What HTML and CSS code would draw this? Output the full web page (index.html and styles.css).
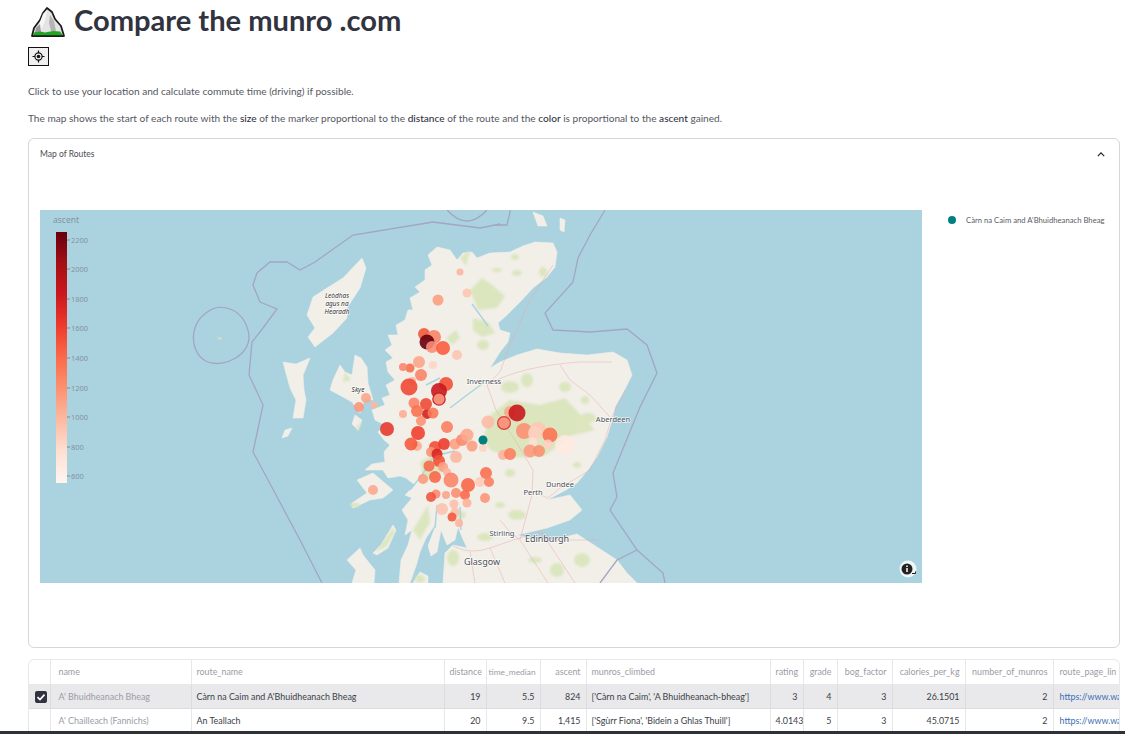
FILE: index.html
```html
<!DOCTYPE html>
<html lang="en">
<head>
  <meta charset="UTF-8" />
  <meta name="viewport" content="width=device-width, initial-scale=1.0"/>
  <title>Compare the munro .com</title>
  <link rel="stylesheet" href="styles.css">
</head>
<body>

  <div class="page">
    <div class="title-row">
      <svg class="logo" viewBox="0 0 34 31" width="34" height="31">
        <path d="M1 29 L3 21 L9 13 L12 6 L16 1 L21 5 L24 12 L30 19 L33 29 Z" fill="#e4e4e4" stroke="#1c1c1c" stroke-width="1.8" stroke-linejoin="round"/>
        <path d="M12 7 L16 3 L14 14 L9 26 L7 20 Z" fill="#f6f6f6"/>
        <path d="M19 8 L23 14 L25 24 L20 24 L18 16 Z" fill="#b4b4b4"/>
        <path d="M5 21 L9 17 L10 25 L4 26 Z" fill="#9a9a9a"/>
        <path d="M2 28.2 L3 25.5 L9 24.5 L14 25.5 L22 24 L29 24.5 L32 28.2 Z" fill="#1fa51f"/>
      </svg>
      <h1>Compare the munro .com</h1>
    </div>

    <button class="locate-btn" type="button">
      <svg viewBox="0 0 13 13" width="13" height="13">
        <circle cx="6.5" cy="6.5" r="3.6" fill="none" stroke="#111" stroke-width="1.2"/>
        <circle cx="6.5" cy="6.5" r="1.8" fill="#111"/>
        <path d="M6.5 0.5V3M6.5 10V12.5M0.5 6.5H3M10 6.5H12.5" stroke="#111" stroke-width="1.2"/>
      </svg>
    </button>

    <p class="intro">Click to use your location and calculate commute time (driving) if possible.</p>
    <p class="intro second">The map shows the start of each route with the <b>size</b> of the marker proportional to the <b>distance</b> of the route and the <b>color</b> is proportional to the <b>ascent</b> gained.</p>

    <section class="expander">
      <div class="expander-head">
        <span>Map of Routes</span>
        <svg viewBox="0 0 10 6" width="8" height="5"><path d="M1 5 L5 1 L9 5" fill="none" stroke="#222" stroke-width="1.5"/></svg>
      </div>

      <div class="chart">
        <svg class="map" viewBox="40 210 882 373" width="882" height="373">
          <defs>
            <linearGradient id="reds" x1="0" y1="1" x2="0" y2="0">
              <stop offset="0" stop-color="#fff5f0"/>
              <stop offset="0.125" stop-color="#fee0d2"/>
              <stop offset="0.25" stop-color="#fcbba1"/>
              <stop offset="0.375" stop-color="#fc9272"/>
              <stop offset="0.5" stop-color="#fb6a4a"/>
              <stop offset="0.625" stop-color="#ef3b2c"/>
              <stop offset="0.75" stop-color="#cb181d"/>
              <stop offset="0.875" stop-color="#a50f15"/>
              <stop offset="1" stop-color="#67000d"/>
            </linearGradient>
          </defs>

          <rect x="40" y="210" width="882" height="373" fill="#aad3df"/>

          <!-- land -->
          <g class="land">
            <path d="M437 247 L450 250 L457 260 L463 253 L472 252 L477 258 L490 253 L510 252 L523 246 L535 242 L553 243 L557 252 L555 267 L547 277 L533 288 L520 302 L507 315 L498 323 L500 330 L510 333 L508 342 L500 352 L495 360 L490 368 L500 362 L517 355 L537 349 L560 353 L587 355 L613 352 L627 360 L632 375 L623 393 L615 407 L613 417 L607 437 L597 457 L588 470 L577 483 L566 490 L547 500 L570 495 L582 510 L570 520 L547 528 L517 535 L530 538 L553 540 L577 534 L597 547 L617 560 L627 573 L637 583 L443 583 L445 553 L453 545 L467 548 L462 537 L458 527 L455 540 L447 545 L441 530 L437 552 L431 556 L428 546 L437 522 L426 538 L420 552 L416 566 L410 583 L399 583 L401 560 L408 545 L412 530 L405 535 L408 520 L402 510 L412 498 L405 495 L415 485 L406 478 L400 476 L388 478 L383 470 L365 470 L372 464 L385 462 L384 452 L390 445 L384 440 L378 432 L385 425 L375 420 L372 410 L385 405 L382 398 L390 395 L386 385 L395 380 L388 372 L386 362 L393 358 L385 350 L392 345 L388 335 L398 335 L396 325 L405 320 L408 310 L413 310 L410 298 L420 292 L415 287 L425 280 L425 270 L432 265 L428 255 Z"/>
            <path d="M333 380 L340 365 L345 372 L352 375 L355 355 L361 358 L367 367 L368 383 L373 400 L365 398 L360 413 L352 402 L343 397 L330 390 Z"/>
            <path d="M362 258 L366 268 L360 288 L347 308 L347 318 L333 333 L315 347 L308 337 L315 328 L307 315 L313 297 L327 288 L343 278 Z"/>
            <path d="M283 362 L296 364 L310 358 L306 368 L303 375 L304 390 L306 400 L303 418 L293 418 L296 400 L290 388 Z"/>
            <path d="M292 428 L288 436 L282 438 L285 430 Z"/>
            <path d="M357 480 L373 473 L393 490 L383 498 L370 500 L353 508 L352 503 L367 493 Z"/>
            <path d="M347 560 L360 548 L363 555 L375 570 L374 583 L352 583 L356 570 Z"/>
            <path d="M533 212 L543 216 L547 226 L538 226 Z"/>
            <path d="M560 218 L565 220 L564 232 L560 230 Z"/>
            <path d="M355 415 L362 420 L358 430 L352 424 Z"/>
            <path d="M413 583 L420 572 L428 576 L428 583 Z"/>
            <path d="M393 525 L381 545 L373 553 L377 555 L388 548 L396 530 Z"/>
          </g>

          <!-- woods and hills -->
          <g class="green">
            <path d="M470 290 L482 278 L490 283 L505 296 L497 308 L478 310 Z"/>
            <path d="M473 318 L488 322 L495 333 L482 337 L473 330 Z"/>
            <path d="M446 338 L456 330 L460 338 L452 345 Z"/>
            <path d="M460 258 L470 250 L466 266 Z"/>
            <path d="M483 440 L490 415 L510 400 L540 405 L565 398 L595 430 L570 436 L545 456 L510 458 L490 450 Z"/>
            <path d="M393 528 L381 545 L375 552 L386 547 L395 532 Z"/>
            <path d="M420 462 L440 450 L445 470 L425 482 Z"/>
            <path d="M413 530 L428 505 L430 522 L420 540 Z"/>
            <path d="M356 428 L362 420 L358 432 Z"/>
            <path d="M345 372 L351 380 L343 382 Z"/>
            <ellipse cx="515" cy="257" rx="4" ry="3"/>
            <ellipse cx="497" cy="270" rx="5" ry="2"/>
            <ellipse cx="517" cy="273" rx="5" ry="3"/>
            <ellipse cx="543" cy="272" rx="4" ry="5"/>
            <ellipse cx="483" cy="345" rx="6" ry="5"/>
            <ellipse cx="510" cy="387" rx="9" ry="6"/>
            <ellipse cx="527" cy="380" rx="6" ry="7"/>
            <ellipse cx="565" cy="387" rx="6" ry="5"/>
            <ellipse cx="585" cy="400" rx="4" ry="4"/>
            <ellipse cx="588" cy="418" rx="8" ry="5"/>
            <ellipse cx="577" cy="465" rx="4" ry="3"/>
            <ellipse cx="510" cy="473" rx="5" ry="4"/>
            <ellipse cx="517" cy="515" rx="9" ry="5"/>
            <ellipse cx="485" cy="537" rx="8" ry="4"/>
            <ellipse cx="557" cy="570" rx="7" ry="7"/>
            <ellipse cx="582" cy="560" rx="8" ry="7"/>
            <ellipse cx="535" cy="560" rx="7" ry="3"/>
            <ellipse cx="453" cy="558" rx="6" ry="8"/>
            <ellipse cx="420" cy="579" rx="5" ry="4"/>
            <ellipse cx="355" cy="505" rx="5" ry="2"/>
            <ellipse cx="460" cy="515" rx="6" ry="4"/>
            <ellipse cx="500" cy="505" rx="5" ry="3"/>
          </g>

          <!-- lochs -->
          <g class="lochs">
            <path d="M450 408 L467 395 L482 384"/>
            <path d="M410 490 L422 475 L436 453"/>
            <path d="M438 455 L455 451"/>
            <path d="M437 505 L435 528"/>
            <path d="M460 507 L461 530"/>
            <path d="M472 304 L488 326"/>
            <path d="M426 385 L440 378"/>
          </g>

          <!-- roads -->
          <g class="roads">
            <path d="M453 546 Q470 555 490 548 T538 532 L556 540 L600 540"/>
            <path d="M500 520 L510 532 L520 540 L532 495 L533 470 L515 440 L496 410 L487 385 Q520 366 580 362 L612 362"/>
            <path d="M533 492 L548 498 L560 488 L590 470 L605 440 L612 417 L625 390"/>
            <path d="M487 385 L500 372 L510 345 L530 300 L553 265"/>
            <path d="M470 552 L475 583 M490 548 L505 583 M520 540 L548 583 M540 530 L575 583"/>
            <path d="M610 417 L590 395 L570 380 L560 365"/>
          </g>

          <!-- maritime borders -->
          <g class="border">
            <path d="M500 224 L480 228 L433 222 L353 235 L315 262 L300 270 L287 262 L270 262 L257 273 L253 285 L260 302 L277 309 L263 328 L252 342 L249 375 L263 405 L253 452 L275 493 L300 540 L322 583"/>
            <path d="M495 225 L507 225 L510 212 L510 210"/>
            <path d="M447 210 Q467 232 487 210"/>
            <path d="M605 210 L590 235 L578 258 L573 282 L545 313 L553 330 L590 332 L627 329 L647 345 L657 373 L640 407 L613 473 L617 497 L610 510 L637 550 L663 573 L665 583"/>
            <path d="M637 550 L617 560 L600 583"/>
            <path d="M206 313 C222 300 245 310 249 335 C250 355 225 368 208 362 C190 355 188 325 206 313 Z"/>
          </g>
          <path d="M217 337 L222 338 L220 340 Z" fill="#dde4b4"/>

          <!-- route markers -->
          <g class="markers">
            <circle cx="438" cy="300" r="5.5" fill="#fc9e80"/>
            <circle cx="460" cy="272" r="3.5" fill="#fbb6a0"/>
            <circle cx="467" cy="293" r="4.5" fill="#fcc7b2"/>
            <circle cx="424" cy="334" r="6" fill="#ef5a3c"/>
            <circle cx="434" cy="337" r="7" fill="#f9836a"/>
            <circle cx="427" cy="342" r="7.5" fill="#67000d"/>
            <circle cx="432" cy="347" r="6" fill="#fb8d74"/>
            <circle cx="443" cy="348" r="7" fill="#fb5c3f"/>
            <circle cx="457" cy="355" r="5" fill="#fcc5b0"/>
            <circle cx="419" cy="362" r="6" fill="#fca58b"/>
            <circle cx="433" cy="365" r="4" fill="#fdd5c5"/>
            <circle cx="410" cy="368" r="4.5" fill="#f7704f"/>
            <circle cx="403" cy="367" r="4" fill="#f9876e"/>
            <circle cx="421" cy="375" r="6" fill="#fb8466"/>
            <circle cx="412" cy="381" r="4" fill="#fbb19a"/>
            <circle cx="409" cy="387" r="8.5" fill="#ef4a36"/>
            <circle cx="446" cy="384" r="7" fill="#f44f36"/>
            <circle cx="439" cy="391" r="8" fill="#c9181d"/>
            <circle cx="439" cy="399" r="6.8" fill="#c9181d"/>
            <circle cx="439" cy="399" r="5.5" fill="#fb9a7f"/>
            <circle cx="366" cy="398" r="5" fill="#fca68b"/>
            <circle cx="359" cy="407" r="5" fill="#fc9679"/>
            <circle cx="374" cy="405" r="3.5" fill="#fcb7a0"/>
            <circle cx="403" cy="414" r="4" fill="#fcae95"/>
            <circle cx="414" cy="403" r="5.5" fill="#fb8466"/>
            <circle cx="427" cy="414" r="5" fill="#d42020"/>
            <circle cx="426" cy="404" r="6" fill="#ef4a36"/>
            <circle cx="417" cy="411" r="6" fill="#f9714f"/>
            <circle cx="433" cy="413" r="5.5" fill="#fb7858"/>
            <circle cx="421" cy="421" r="5" fill="#fc9272"/>
            <circle cx="387" cy="429" r="7" fill="#e63a2e"/>
            <circle cx="418" cy="433" r="7" fill="#ef3f2f"/>
            <circle cx="447" cy="427" r="6" fill="#fb8060"/>
            <circle cx="417" cy="446" r="5" fill="#fcae95"/>
            <circle cx="411" cy="444" r="6.5" fill="#f65b40"/>
            <circle cx="435" cy="447" r="6" fill="#ef4f38"/>
            <circle cx="444" cy="444" r="6" fill="#ec3c2c"/>
            <circle cx="455" cy="444" r="5.5" fill="#fca084"/>
            <circle cx="462" cy="440" r="6" fill="#fb8a6e"/>
            <circle cx="467" cy="435" r="6.5" fill="#fca78e"/>
            <circle cx="472" cy="446" r="5.5" fill="#fc9e84"/>
            <circle cx="488" cy="422" r="6.5" fill="#fcbba6"/>
            <circle cx="431" cy="452" r="5" fill="#fb9175"/>
            <circle cx="437" cy="454" r="5.5" fill="#d92620"/>
            <circle cx="439" cy="461" r="6" fill="#f4503a"/>
            <circle cx="456" cy="457" r="6" fill="#fcb7a0"/>
            <circle cx="429" cy="466" r="5.5" fill="#f8694c"/>
            <circle cx="443" cy="467" r="5" fill="#fca085"/>
            <circle cx="447" cy="472" r="4" fill="#fdb49f"/>
            <circle cx="486" cy="473" r="6" fill="#fb7050"/>
            <circle cx="435" cy="477" r="6" fill="#f8674a"/>
            <circle cx="423" cy="479" r="5" fill="#fb9a7e"/>
            <circle cx="451" cy="480" r="7.5" fill="#fb8569"/>
            <circle cx="480" cy="482" r="5" fill="#fdcbb8"/>
            <circle cx="468" cy="485" r="7" fill="#f86749"/>
            <circle cx="489" cy="482" r="5" fill="#fb8060"/>
            <circle cx="373" cy="490" r="5" fill="#fca78e"/>
            <circle cx="436" cy="494" r="4.5" fill="#fb8a6e"/>
            <circle cx="431" cy="497" r="5" fill="#f2563f"/>
            <circle cx="446" cy="495" r="4" fill="#fca58b"/>
            <circle cx="456" cy="493" r="5" fill="#fb8d72"/>
            <circle cx="465" cy="495" r="5" fill="#f9694c"/>
            <circle cx="485" cy="498" r="5" fill="#fc9678"/>
            <circle cx="467" cy="503" r="4.5" fill="#fcb29b"/>
            <circle cx="454" cy="504" r="4.5" fill="#fdc0ac"/>
            <circle cx="442" cy="509" r="6" fill="#fdc3af"/>
            <circle cx="455" cy="512" r="4.5" fill="#fcc0ac"/>
            <circle cx="452" cy="517" r="4.5" fill="#f4583c"/>
            <circle cx="459" cy="523" r="4" fill="#fcb5a0"/>
            <circle cx="510" cy="412" r="6" fill="#fca68b"/>
            <circle cx="517" cy="413" r="8.5" fill="#c9181d"/>
            <circle cx="504" cy="423" r="7" fill="#d62f27"/>
            <circle cx="504" cy="423" r="5.8" fill="#fc9f87"/>
            <circle cx="524" cy="431" r="8" fill="#fc8f72"/>
            <circle cx="538" cy="430" r="8" fill="#fdc7b3"/>
            <circle cx="535" cy="433" r="7" fill="#fdd0be"/>
            <circle cx="550" cy="435" r="7.5" fill="#fb7454"/>
            <circle cx="533" cy="442" r="4.5" fill="#fee0d3"/>
            <circle cx="548" cy="444" r="4.5" fill="#fdd2c1"/>
            <circle cx="530" cy="451" r="6.5" fill="#fc9a7e"/>
            <circle cx="539" cy="451" r="6" fill="#fb9072"/>
            <circle cx="503" cy="455" r="5" fill="#fdb29d"/>
            <circle cx="510" cy="454" r="6" fill="#fb7f60"/>
            <circle cx="565" cy="445" r="10" fill="#fee9e0"/>
            <circle cx="483" cy="448" r="4" fill="#fdd5c6"/>
          </g>
          <circle cx="483" cy="440" r="4.5" fill="#008080"/>

          <!-- place names -->
          <g class="places">
            <text x="484" y="384">Inverness</text>
            <text x="613" y="422">Aberdeen</text>
            <text x="560" y="487">Dundee</text>
            <text x="533" y="495">Perth</text>
            <text x="502" y="536">Stirling</text>
            <text class="big" x="547" y="542">Edinburgh</text>
            <text class="big" x="482" y="565">Glasgow</text>
            <text class="isle" x="358" y="392">Skye</text>
            <text class="isle" x="337" y="298">Leòdhas</text>
            <text class="isle" x="337" y="306">agus na</text>
            <text class="isle" x="337" y="314">Hearadh</text>
          </g>

          <!-- colorbar -->
          <rect x="56" y="232" width="11" height="251" fill="url(#reds)"/>
          <g class="bar-ticks">
            <path d="M67 240h3M67 269h3M67 299h3M67 328h3M67 358h3M67 388h3M67 417h3M67 447h3M67 476h3"/>
          </g>
          <g class="bar-labels">
            <text class="bar-title" x="53" y="223">ascent</text>
            <text x="71" y="243">2200</text>
            <text x="71" y="272">2000</text>
            <text x="71" y="302">1800</text>
            <text x="71" y="331">1600</text>
            <text x="71" y="361">1400</text>
            <text x="71" y="391">1200</text>
            <text x="71" y="420">1000</text>
            <text x="71" y="450">800</text>
            <text x="71" y="479">600</text>
          </g>

          <!-- attribution button -->
          <circle cx="908" cy="569" r="8.5" fill="#fff" fill-opacity="0.8"/>
          <circle cx="907" cy="569" r="5.5" fill="#222"/>
          <path d="M907 565.5v1.4M907 568v4" stroke="#fff" stroke-width="1.5"/>
          <path d="M912 573.5h3.5v-2" fill="none" stroke="#222" stroke-width="1"/>
        </svg>

        <div class="legend">
          <span class="legend-dot"></span>
          <span>Càrn na Caim and A'Bhuidheanach Bheag</span>
        </div>
      </div>
    </section>

    <div class="table-wrap">
      <table class="routes">
        <colgroup>
          <col class="c-check"><col class="c-name"><col class="c-route"><col class="c-dist"><col class="c-time">
          <col class="c-asc"><col class="c-munros"><col class="c-rating"><col class="c-grade"><col class="c-bog">
          <col class="c-cal"><col class="c-num"><col class="c-link">
        </colgroup>
        <thead>
          <tr>
            <th></th><th>name</th><th>route_name</th><th>distance</th><th class="tight">time_median</th><th>ascent</th>
            <th>munros_climbed</th><th>rating</th><th>grade</th><th>bog_factor</th><th>calories_per_kg</th>
            <th>number_of_munros</th><th>route_page_lin</th>
          </tr>
        </thead>
        <tbody>
          <tr class="selected">
            <td class="check"><span class="checkbox"><svg viewBox="0 0 10 10" width="10" height="10"><path d="M1.5 5.2 L4 7.6 L8.5 2.6" fill="none" stroke="#fff" stroke-width="1.7"/></svg></span></td>
            <td class="idx">A' Bhuidheanach Bheag</td>
            <td>Càrn na Caim and A'Bhuidheanach Bheag</td>
            <td class="num">19</td><td class="num">5.5</td><td class="num">824</td>
            <td>['Càrn na Caim', 'A Bhuidheanach-bheag']</td>
            <td class="num">3</td><td class="num">4</td><td class="num">3</td><td class="num">26.1501</td><td class="num">2</td>
            <td class="link">https://www.wa</td>
          </tr>
          <tr>
            <td class="check"></td>
            <td class="idx">A' Chailleach (Fannichs)</td>
            <td>An Teallach</td>
            <td class="num">20</td><td class="num">9.5</td><td class="num">1,415</td>
            <td>['Sgùrr Fiona', 'Bidein a Ghlas Thuill']</td>
            <td class="num">4.0143</td><td class="num">5</td><td class="num">3</td><td class="num">45.0715</td><td class="num">2</td>
            <td class="link">https://www.wa</td>
          </tr>
          <tr>
            <td class="check"></td><td></td><td></td><td></td><td></td><td></td><td></td><td></td><td></td><td></td><td></td><td></td><td></td>
          </tr>
        </tbody>
      </table>
    </div>
  </div>

  <div class="bottom-edge"></div>

</body>
</html>
```

FILE: styles.css
```css
html, body {
  height: 734px;
  overflow: hidden;
}
body {
  font-family: 'Lato', 'Noto Sans', sans-serif;
  background: #fff;
  color: #31333f;
  margin: 0;
  padding: 0;
}
.page {
  padding: 0 5px 0 28px;
}
.title-row {
  display: flex;
  align-items: center;
  gap: 9px;
  height: 43px;
  padding-left: 3px;
}
.logo {
  flex: none;
  margin-top: 1px;
}
h1 {
  margin: 0;
  padding-bottom: 4px;
  font-family: 'Lato', sans-serif;
  font-size: 29.1px;
  font-weight: 700;
  color: #31333f;
  line-height: 39px;
}
.locate-btn {
  display: flex;
  align-items: center;
  justify-content: center;
  width: 21px;
  height: 19px;
  margin-top: 4px;
  padding: 0;
  background: #f0f0f0;
  border: 1px solid #111;
}
.intro {
  margin: 0;
  font-size: 10.1px;
  line-height: 14px;
  padding-top: 18px;
  color: #55575f;
}
.intro.second {
  padding-top: 13px;
}
.intro b {
  font-weight: 500;
  color: #31333f;
}
.expander {
  margin-top: 13px;
  height: 508px;
  border: 1px solid #d6d6d8;
  border-radius: 6px;
}
.expander-head {
  display: flex;
  align-items: center;
  justify-content: space-between;
  height: 30px;
  padding: 0 14px 0 11px;
  font-size: 8.5px;
  color: #4a4c56;
}
.chart {
  display: flex;
  padding: 41px 0 0 11px;
}
.map {
  display: block;
  flex: none;
}
.land {
  fill: #f2efe9;
  stroke: #f2efe9;
  stroke-width: 0.6;
  stroke-linejoin: round;
  filter: blur(0.5px);
}
.green {
  fill: #dbe6bf;
  filter: blur(0.8px);
}
.lochs {
  fill: none;
  stroke: #aad3df;
  stroke-width: 1.4;
  filter: blur(0.3px);
}
.roads {
  fill: none;
  stroke: #eaa9ac;
  stroke-width: 0.7;
  stroke-opacity: 0.7;
  filter: blur(0.3px);
}
.border {
  fill: none;
  stroke: #a3a6c2;
  stroke-width: 1.3;
  filter: blur(0.3px);
}
.markers {
  filter: blur(0.3px);
}
.markers circle {
  opacity: 0.9;
}
.places text {
  font-family: 'Noto Sans', sans-serif;
  font-size: 7.5px;
  fill: #4f5158;
  stroke: #fff;
  stroke-width: 1.5px;
  stroke-opacity: 0.7;
  paint-order: stroke;
  text-anchor: middle;
}
.places .big {
  font-size: 9px;
}
.places .isle {
  font-size: 6.5px;
  font-style: italic;
  fill: #333;
}
.bar-ticks path {
  stroke: #6c7a89;
  stroke-width: 0.8;
}
.bar-labels text {
  font-family: 'Noto Sans', sans-serif;
  font-size: 7.5px;
  fill: #8592a1;
}
.bar-labels .bar-title {
  font-size: 8.5px;
}
.legend {
  display: flex;
  align-items: center;
  gap: 10px;
  height: 20px;
  margin-left: 26px;
  font-size: 7.7px;
  color: #5a5c64;
  white-space: nowrap;
}
.legend-dot {
  width: 8px;
  height: 8px;
  border-radius: 50%;
  background: #008080;
}
.table-wrap {
  margin-top: 11px;
  width: 1092px;
  height: 75px;
  overflow: hidden;
  border: 1px solid #e8e8ea;
  border-bottom: none;
  border-radius: 6px 6px 0 0;
  box-sizing: border-box;
}
.routes {
  table-layout: fixed;
  width: 1091px;
  border-collapse: collapse;
  font-size: 8.9px;
}
.c-check { width: 21px; }
.c-name { width: 141px; }
.c-route { width: 253px; }
.c-dist { width: 42px; }
.c-time { width: 54px; }
.c-asc { width: 46px; }
.c-munros { width: 184px; }
.c-rating { width: 33px; }
.c-grade { width: 34px; }
.c-bog { width: 55px; }
.c-cal { width: 73px; }
.c-num { width: 88px; }
.c-link { width: 67px; }
.routes th, .routes td {
  height: 24px;
  padding: 0 5px;
  box-sizing: border-box;
  border: 1px solid #e8e8ea;
  border-top: none;
  overflow: hidden;
  white-space: nowrap;
  text-align: left;
  font-weight: 400;
  color: #3b3d47;
}
.routes th {
  color: #9a9ca6;
}
.routes th:nth-child(2), .routes .idx {
  padding-left: 8px;
}
.routes th:last-child, .routes .link {
  padding: 0 0 0 6px;
}
.routes th:nth-child(n+4):nth-child(-n+6),
.routes th:nth-child(n+8):nth-child(-n+12) {
  text-align: right;
}
.routes th.tight {
  padding-left: 2px;
  font-size: 8.4px;
}
.routes tr > :first-child {
  border-left: none;
}
.routes tr > :last-child {
  border-right: none;
}
.routes .selected td {
  background: #e9e9eb;
  border-color: #dcdcdf;
}
.routes .idx {
  color: #9a9ca6;
}
.routes .num {
  text-align: right;
}
.routes .link {
  color: #3b6fb6;
}
.routes .check {
  padding: 0 0 0 3px;
  text-align: center;
}
.checkbox {
  display: inline-flex;
  align-items: center;
  justify-content: center;
  width: 12px;
  height: 12px;
  margin-top: 2px;
  background: #31333f;
  border-radius: 2px;
}
.bottom-edge {
  position: fixed;
  left: 0;
  right: 0;
  bottom: 0;
  height: 3px;
  background: #2f3138;
}
```
